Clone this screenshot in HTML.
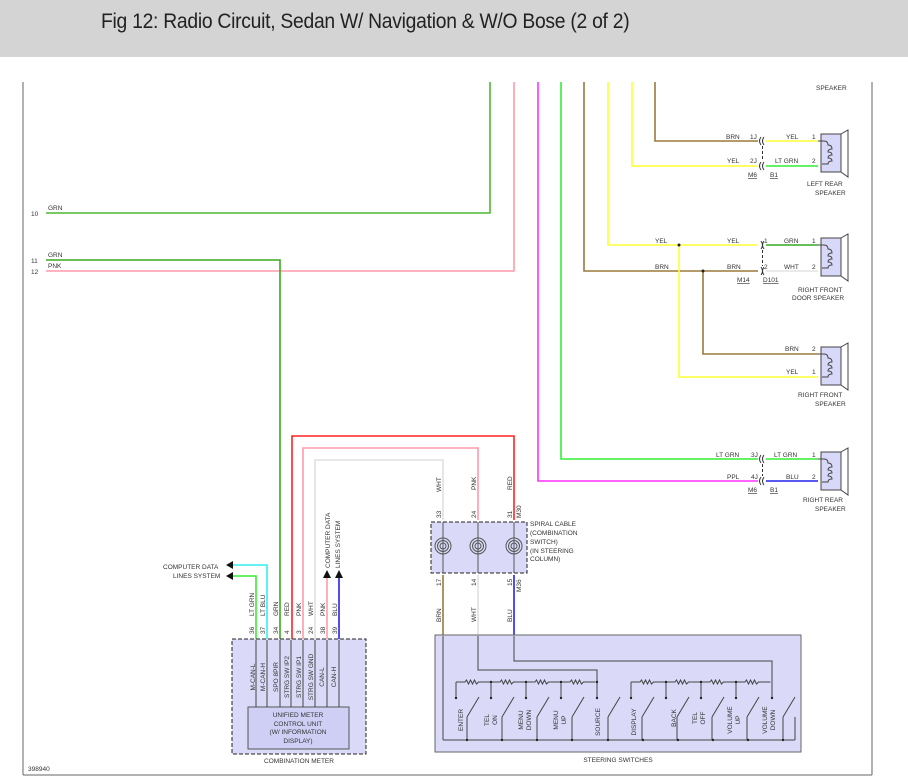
<!DOCTYPE html>
<html><head><meta charset="utf-8"><style>
html,body{margin:0;padding:0;background:#fff;}
body{width:908px;height:781px;overflow:hidden;position:relative;font-family:"Liberation Sans",sans-serif;}
.hdr{position:absolute;left:0;top:0;width:908px;height:57px;background:#d4d4d4;}
.hdr span{position:absolute;left:101px;top:10px;font-size:21px;color:#222;letter-spacing:-0.3px;transform:scaleX(0.92);transform-origin:left;}
svg{position:absolute;left:0;top:0;}
text{font-family:"Liberation Sans",sans-serif;font-size:6.5px;fill:#333;}
</style></head><body>
<div class="hdr"><span>Fig 12: Radio Circuit, Sedan W/ Navigation &amp; W/O Bose (2 of 2)</span></div>
<svg width="908" height="781" viewBox="0 0 908 781">
<g stroke="#666" stroke-width="1" fill="none">
<line x1="23" y1="82" x2="23" y2="775"/><line x1="23" y1="775" x2="872" y2="775"/><line x1="872" y1="82" x2="872" y2="775"/>
</g>
<g fill="none" stroke-width="1.6">
<polyline points="490,82 490,213 46,213" stroke="#4cb830"/>
<polyline points="514,82 514,271 46,271" stroke="#ff9aa8"/>
<polyline points="46,260 280,260 280,640" stroke="#3aa820"/>
<polyline points="538,82 538,481 758,481" stroke="#ff33ff"/>
<polyline points="561,82 561,459 758,459" stroke="#33ee33"/>
<polyline points="584,82 584,271 758,271" stroke="#9a7a3a"/>
<polyline points="703,271 703,354 818,354" stroke="#9a7a3a"/>
<polyline points="608,82 608,245 758,245" stroke="#ffff33"/>
<polyline points="679,245 679,377 818,377" stroke="#ffff33"/>
<polyline points="632,82 632,166 758,166" stroke="#ffff33"/>
<polyline points="655,82 655,141 758,141" stroke="#9a7a3a"/>
<line x1="766" y1="141" x2="818" y2="141" stroke="#ffff33"/>
<line x1="766" y1="166" x2="818" y2="166" stroke="#33ee33"/>
<line x1="766" y1="245" x2="818" y2="245" stroke="#33aa22"/>
<line x1="766" y1="271" x2="818" y2="271" stroke="#e4e4e4"/>
<line x1="766" y1="459" x2="818" y2="459" stroke="#33ee33"/>
<line x1="766" y1="481" x2="818" y2="481" stroke="#2222ee"/>
</g>
<g fill="#222"><circle cx="679" cy="245" r="1.5"/><circle cx="703" cy="271" r="1.5"/></g>
<g stroke="#333" stroke-width="1" fill="none">
<path d="M761,137 q-3,4 0,8 M764,137 q-3,4 0,8 M761,162 q-3,4 0,8 M764,162 q-3,4 0,8"/>
<path d="M761,241 q3,4 0,8 M764,241 q-3,4 0,8 M761,267 q3,4 0,8 M764,267 q-3,4 0,8"/>
<path d="M761,455 q-3,4 0,8 M764,455 q-3,4 0,8 M761,477 q-3,4 0,8 M764,477 q-3,4 0,8"/>
<line x1="762.5" y1="146" x2="762.5" y2="161" stroke-dasharray="3,2"/>
<line x1="762.5" y1="250" x2="762.5" y2="266" stroke-dasharray="3,2"/>
<line x1="762.5" y1="464" x2="762.5" y2="476" stroke-dasharray="3,2"/>
</g>
<g id="spk">
<g stroke="#444" stroke-width="1">
<rect x="821" y="134" width="20" height="38" fill="#d8d8f8"/>
<polygon points="841,134 848,130 848,177 841,172" fill="#fff"/>
<path d="M818,141 h6 q4,0 4,4 q4,0 4,4 q-4,0 -4,3 q4,0 4,3 q-4,0 -4,3 q4,0 4,3 q-4,0 -4,3 h-6" fill="none"/>
</g></g>
<use href="#spk" transform="translate(0,104)"/>
<use href="#spk" transform="translate(0,213)"/>
<use href="#spk" transform="translate(0,318)"/>
<g>
<text x="816" y="90">SPEAKER</text>
<text x="726" y="139">BRN</text><text x="750" y="139">1J</text><text x="786" y="139">YEL</text><text x="812" y="139">1</text>
<text x="727" y="163">YEL</text><text x="750" y="163">2J</text><text x="775" y="163">LT GRN</text><text x="812" y="163">2</text>
<text x="748" y="177" text-decoration="underline">M6</text><text x="770" y="177" text-decoration="underline">B1</text>
<text x="807" y="186">LEFT REAR</text><text x="815" y="195">SPEAKER</text>
<text x="655" y="243">YEL</text><text x="727" y="243">YEL</text><text x="764" y="243">1</text><text x="784" y="243">GRN</text><text x="812" y="243">1</text>
<text x="655" y="269">BRN</text><text x="727" y="269">BRN</text><text x="764" y="269">2</text><text x="784" y="269">WHT</text><text x="812" y="269">2</text>
<text x="737" y="282" text-decoration="underline">M14</text><text x="763" y="282" text-decoration="underline">D101</text>
<text x="798" y="292">RIGHT FRONT</text><text x="792" y="300">DOOR SPEAKER</text>
<text x="785" y="351">BRN</text><text x="812" y="351">2</text>
<text x="786" y="374">YEL</text><text x="812" y="374">1</text>
<text x="798" y="397">RIGHT FRONT</text><text x="815" y="406">SPEAKER</text>
<text x="716" y="457">LT GRN</text><text x="751" y="457">3J</text><text x="774" y="457">LT GRN</text><text x="812" y="457">1</text>
<text x="727" y="479">PPL</text><text x="751" y="479">4J</text><text x="786" y="479">BLU</text><text x="812" y="479">2</text>
<text x="748" y="492" text-decoration="underline">M6</text><text x="770" y="492" text-decoration="underline">B1</text>
<text x="803" y="502">RIGHT REAR</text><text x="815" y="511">SPEAKER</text>
<text x="31" y="216">10</text><text x="48" y="210">GRN</text>
<text x="31" y="263">11</text><text x="48" y="257">GRN</text>
<text x="31" y="274">12</text><text x="48" y="268">PNK</text>
<text x="28" y="771">398940</text>
</g>
<g fill="none" stroke-width="1.6">
<polyline points="292,640 292,436 514,436 514,520" stroke="#ff2222"/>
<polyline points="303,640 303,448 478,448 478,520" stroke="#ff9aa8"/>
<polyline points="315,640 315,460 443,460 443,520" stroke="#e0e0e0"/>
<line x1="443" y1="575" x2="443" y2="636" stroke="#9a7a3a"/>
<line x1="478" y1="575" x2="478" y2="636" stroke="#e0e0e0"/>
<line x1="514" y1="575" x2="514" y2="636" stroke="#2222ee"/>
<polyline points="256,640 256,576 232,576" stroke="#33ee33"/>
<polyline points="267,640 267,565 232,565" stroke="#33eeee"/>
<line x1="327" y1="640" x2="327" y2="578" stroke="#ff9aa8"/>
<line x1="339" y1="640" x2="339" y2="578" stroke="#2222ee"/>
</g>
<g fill="#111">
<polygon points="226,565 233,561 233,569"/><polygon points="226,576 233,572 233,580"/>
<polygon points="327,570 323,578 331,578"/><polygon points="339,570 335,578 343,578"/>
</g>
<rect x="431" y="522" width="96" height="51" fill="#dadaf8" stroke="#222" stroke-dasharray="4,2"/>
<g fill="none" stroke="#555" stroke-width="1">
<g id="coil"><circle cx="443" cy="546" r="8"/><circle cx="443" cy="546" r="5.5"/><circle cx="443" cy="546" r="3"/><line x1="443" y1="522" x2="443" y2="573"/></g>
<use href="#coil" x="35"/><use href="#coil" x="71"/>
</g>
<g>
<text transform="translate(441,492) rotate(-90)">WHT</text>
<text transform="translate(476,490) rotate(-90)">PNK</text>
<text transform="translate(512,490) rotate(-90)">RED</text>
<text transform="translate(441,518) rotate(-90)">33</text>
<text transform="translate(476,518) rotate(-90)">24</text>
<text transform="translate(512,518) rotate(-90)">31</text>
<text transform="translate(521,518) rotate(-90)">M30</text>
<text transform="translate(441,586) rotate(-90)">17</text>
<text transform="translate(476,586) rotate(-90)">14</text>
<text transform="translate(512,586) rotate(-90)">15</text>
<text transform="translate(521,592) rotate(-90)">M36</text>
<text transform="translate(441,622) rotate(-90)">BRN</text>
<text transform="translate(476,622) rotate(-90)">WHT</text>
<text transform="translate(512,622) rotate(-90)">BLU</text>
<text x="530" y="526">SPIRAL CABLE</text><text x="530" y="535">(COMBINATION</text><text x="530" y="544">SWITCH)</text><text x="530" y="553">(IN STEERING</text><text x="530" y="561">COLUMN)</text>
<text x="163" y="569">COMPUTER DATA</text><text x="173" y="578">LINES SYSTEM</text>
<text transform="translate(330,568) rotate(-90)">COMPUTER DATA</text>
<text transform="translate(340,568) rotate(-90)">LINES SYSTEM</text>
</g>
<rect x="232" y="639" width="134" height="115" fill="#dadaf8" stroke="#222" stroke-dasharray="4,2"/>
<rect x="248" y="707" width="101" height="42" fill="#cfcff5" stroke="#555"/>
<g stroke="#444" stroke-width="1">
<line x1="256" y1="640" x2="256" y2="707"/><line x1="267" y1="640" x2="267" y2="707"/><line x1="280" y1="640" x2="280" y2="707"/><line x1="291" y1="640" x2="291" y2="707"/><line x1="303" y1="640" x2="303" y2="707"/><line x1="315" y1="640" x2="315" y2="707"/><line x1="327" y1="640" x2="327" y2="707"/><line x1="339" y1="640" x2="339" y2="707"/>
</g>
<g>
<text transform="translate(254,616) rotate(-90)">LT GRN</text><text transform="translate(265,616) rotate(-90)">LT BLU</text><text transform="translate(278,616) rotate(-90)">GRN</text><text transform="translate(289,616) rotate(-90)">RED</text><text transform="translate(301,616) rotate(-90)">PNK</text><text transform="translate(313,616) rotate(-90)">WHT</text><text transform="translate(325,616) rotate(-90)">PNK</text><text transform="translate(337,616) rotate(-90)">BLU</text>
<text transform="translate(254,634) rotate(-90)">36</text><text transform="translate(265,634) rotate(-90)">37</text><text transform="translate(278,634) rotate(-90)">34</text><text transform="translate(289,634) rotate(-90)">4</text><text transform="translate(301,634) rotate(-90)">3</text><text transform="translate(313,634) rotate(-90)">24</text><text transform="translate(325,634) rotate(-90)">38</text><text transform="translate(337,634) rotate(-90)">39</text>
<text transform="translate(255,677) rotate(-90)" text-anchor="middle">M-CAN-L</text>
<text transform="translate(265,677) rotate(-90)" text-anchor="middle">M-CAN-H</text>
<text transform="translate(278,677) rotate(-90)" text-anchor="middle">SPO 8PIR</text>
<text transform="translate(289,677) rotate(-90)" text-anchor="middle">STRG SW IP2</text>
<text transform="translate(301,677) rotate(-90)" text-anchor="middle">STRG SW IP1</text>
<text transform="translate(313,677) rotate(-90)" text-anchor="middle">STRG SW GND</text>
<text transform="translate(324,677) rotate(-90)" text-anchor="middle">CAN-L</text>
<text transform="translate(336,677) rotate(-90)" text-anchor="middle">CAN-H</text>
<g text-anchor="middle"><text x="298" y="717">UNIFIED METER</text><text x="298" y="726">CONTROL UNIT</text><text x="298" y="734">(W/ INFORMATION</text><text x="298" y="743">DISPLAY)</text>
<text x="299" y="763">COMBINATION METER</text><text x="618" y="762">STEERING SWITCHES</text></g>
</g>
<rect x="435" y="635" width="366" height="117" fill="#dadaf8" stroke="#666"/>
<g fill="none" stroke="#444" stroke-width="1">
<line x1="443" y1="636" x2="443" y2="740"/>
<polyline points="478,636 478,670 597,670 597,682"/>
<polyline points="514,636 514,661 772,661 772,682"/>
<line x1="443" y1="740" x2="795" y2="740"/>
<path id="res" d="M456,682 h9 l1.5,-2 l2,4 l2,-4 l2,4 l2,-4 l2,4 l2,-2 h12"/>
<use href="#res" x="35"/><use href="#res" x="70"/><use href="#res" x="105"/>
<use href="#res" x="175"/><use href="#res" x="210"/><use href="#res" x="245"/><use href="#res" x="280"/>
<g id="sw"><line x1="456" y1="682" x2="456" y2="698"/><line x1="467" y1="717" x2="479" y2="697"/><line x1="467" y1="717" x2="467" y2="740"/></g>
<use href="#sw" x="35"/><use href="#sw" x="70"/><use href="#sw" x="105"/><use href="#sw" x="141"/>
<use href="#sw" x="175"/><use href="#sw" x="210"/><use href="#sw" x="245"/><use href="#sw" x="280"/><use href="#sw" x="316"/>
<line x1="795" y1="740" x2="795" y2="717"/>
</g>
<g fill="#222">
<circle cx="456" cy="698" r="1.2"/><circle cx="491" cy="698" r="1.2"/><circle cx="526" cy="698" r="1.2"/><circle cx="561" cy="698" r="1.2"/><circle cx="597" cy="698" r="1.2"/>
<circle cx="631" cy="698" r="1.2"/><circle cx="666" cy="698" r="1.2"/><circle cx="701" cy="698" r="1.2"/><circle cx="736" cy="698" r="1.2"/><circle cx="772" cy="698" r="1.2"/>
<circle cx="491" cy="682" r="1.2"/><circle cx="526" cy="682" r="1.2"/><circle cx="561" cy="682" r="1.2"/><circle cx="597" cy="682" r="1.2"/>
<circle cx="666" cy="682" r="1.2"/><circle cx="701" cy="682" r="1.2"/><circle cx="736" cy="682" r="1.2"/>
<circle cx="467" cy="740" r="1.2"/><circle cx="502" cy="740" r="1.2"/><circle cx="537" cy="740" r="1.2"/><circle cx="572" cy="740" r="1.2"/><circle cx="608" cy="740" r="1.2"/><circle cx="643" cy="740" r="1.2"/><circle cx="678" cy="740" r="1.2"/><circle cx="713" cy="740" r="1.2"/><circle cx="748" cy="740" r="1.2"/><circle cx="783" cy="740" r="1.2"/>
</g>
<g text-anchor="middle">
<text transform="translate(463,720) rotate(-90)">ENTER</text>
<text transform="translate(489,720) rotate(-90)">TEL</text><text transform="translate(497,720) rotate(-90)">ON</text>
<text transform="translate(523,720) rotate(-90)">MENU</text><text transform="translate(531,720) rotate(-90)">DOWN</text>
<text transform="translate(558,720) rotate(-90)">MENU</text><text transform="translate(566,720) rotate(-90)">UP</text>
<text transform="translate(600,722) rotate(-90)">SOURCE</text>
<text transform="translate(636,722) rotate(-90)">DISPLAY</text>
<text transform="translate(676,718) rotate(-90)">BACK</text>
<text transform="translate(697,718) rotate(-90)">TEL</text><text transform="translate(705,718) rotate(-90)">OFF</text>
<text transform="translate(732,720) rotate(-90)">VOLUME</text><text transform="translate(740,720) rotate(-90)">UP</text>
<text transform="translate(767,720) rotate(-90)">VOLUME</text><text transform="translate(775,720) rotate(-90)">DOWN</text>
</g>
</svg>
</body></html>
